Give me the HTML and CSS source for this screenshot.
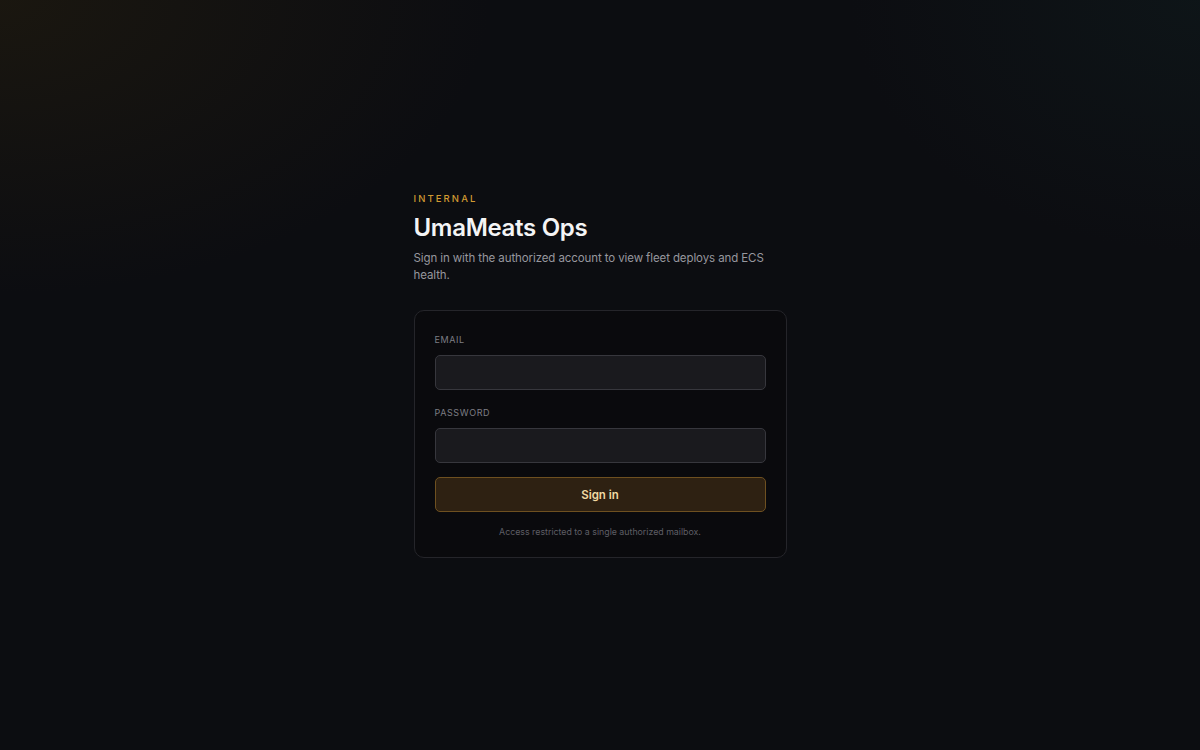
FILE: index.html
```html
<!DOCTYPE html>
<html lang="en">
<head>
<meta charset="utf-8">
<title>UmaMeats Ops</title>
<link rel="stylesheet" href="styles.css">
</head>
<body>
<main class="page">
  <section class="panel">
    <header class="intro">
      <p class="eyebrow">INTERNAL</p>
      <h1 class="title">UmaMeats Ops</h1>
      <p class="lead">Sign in with the authorized account to view fleet deploys and ECS health.</p>
    </header>
    <form class="card">
      <label class="field">
        <span class="label">EMAIL</span>
        <input class="input" type="email">
      </label>
      <label class="field">
        <span class="label">PASSWORD</span>
        <input class="input" type="password">
      </label>
      <button class="button" type="button">Sign in</button>
      <p class="note">Access restricted to a single authorized mailbox.</p>
    </form>
  </section>
</main>
</body>
</html>
```

FILE: styles.css
```css
* { box-sizing: border-box; }
html, body { margin: 0; padding: 0; }
body {
  font-family: Inter, "Noto Sans", sans-serif;
  background-color: #0c0d11;
  background-image:
    radial-gradient(ellipse 700px 420px at 0% 0%, rgba(40, 32, 14, 0.5), rgba(40, 32, 14, 0) 70%),
    radial-gradient(ellipse 500px 360px at 100% 0%, rgba(16, 30, 32, 0.45), rgba(16, 30, 32, 0) 70%);
  color: #eee;
  min-height: 100vh;
}
.page {
  min-height: 100vh;
  display: flex;
  align-items: center;
  justify-content: center;
}
.panel {
  width: 373px;
  display: flex;
  flex-direction: column;
}
.intro { margin-bottom: 27px; }
.eyebrow {
  margin: 0;
  font-size: 9.5px;
  line-height: 14px;
  letter-spacing: 2.1px;
  font-weight: 500;
  color: #d19a32;
}
.title {
  margin: 7px 0 7px;
  font-size: 24px;
  line-height: 30px;
  font-weight: 600;
  letter-spacing: -0.3px;
  color: #f4f4f5;
}
.lead {
  margin: 0;
  max-width: 356px;
  font-size: 11.5px;
  line-height: 16.5px;
  letter-spacing: -0.1px;
  color: #97979e;
}
.card {
  margin: 0;
  border: 1px solid #25252a;
  border-radius: 10px;
  background: #0a0a0d;
  padding: 22px 20px 19px;
  display: flex;
  flex-direction: column;
  gap: 14px;
}
.field {
  display: flex;
  flex-direction: column;
  gap: 8px;
}
.field + .field { margin-top: 2px; }
.label {
  font-size: 9px;
  line-height: 14px;
  letter-spacing: 0.6px;
  color: #7d7d84;
}
.input {
  height: 35px;
  width: 100%;
  border: 1px solid #37373d;
  border-radius: 5px;
  background: #1a1a1e;
  color: #eee;
  font: inherit;
  outline: none;
}
.button {
  height: 35px;
  width: 100%;
  border: 1px solid #6e5020;
  border-radius: 5px;
  background: #2e2112;
  color: #f0d9a2;
  font-family: inherit;
  font-size: 11.5px;
  font-weight: 600;
  cursor: pointer;
}
.note {
  margin: 0;
  text-align: center;
  font-size: 8.8px;
  line-height: 12px;
  color: #5e5e65;
}
```
